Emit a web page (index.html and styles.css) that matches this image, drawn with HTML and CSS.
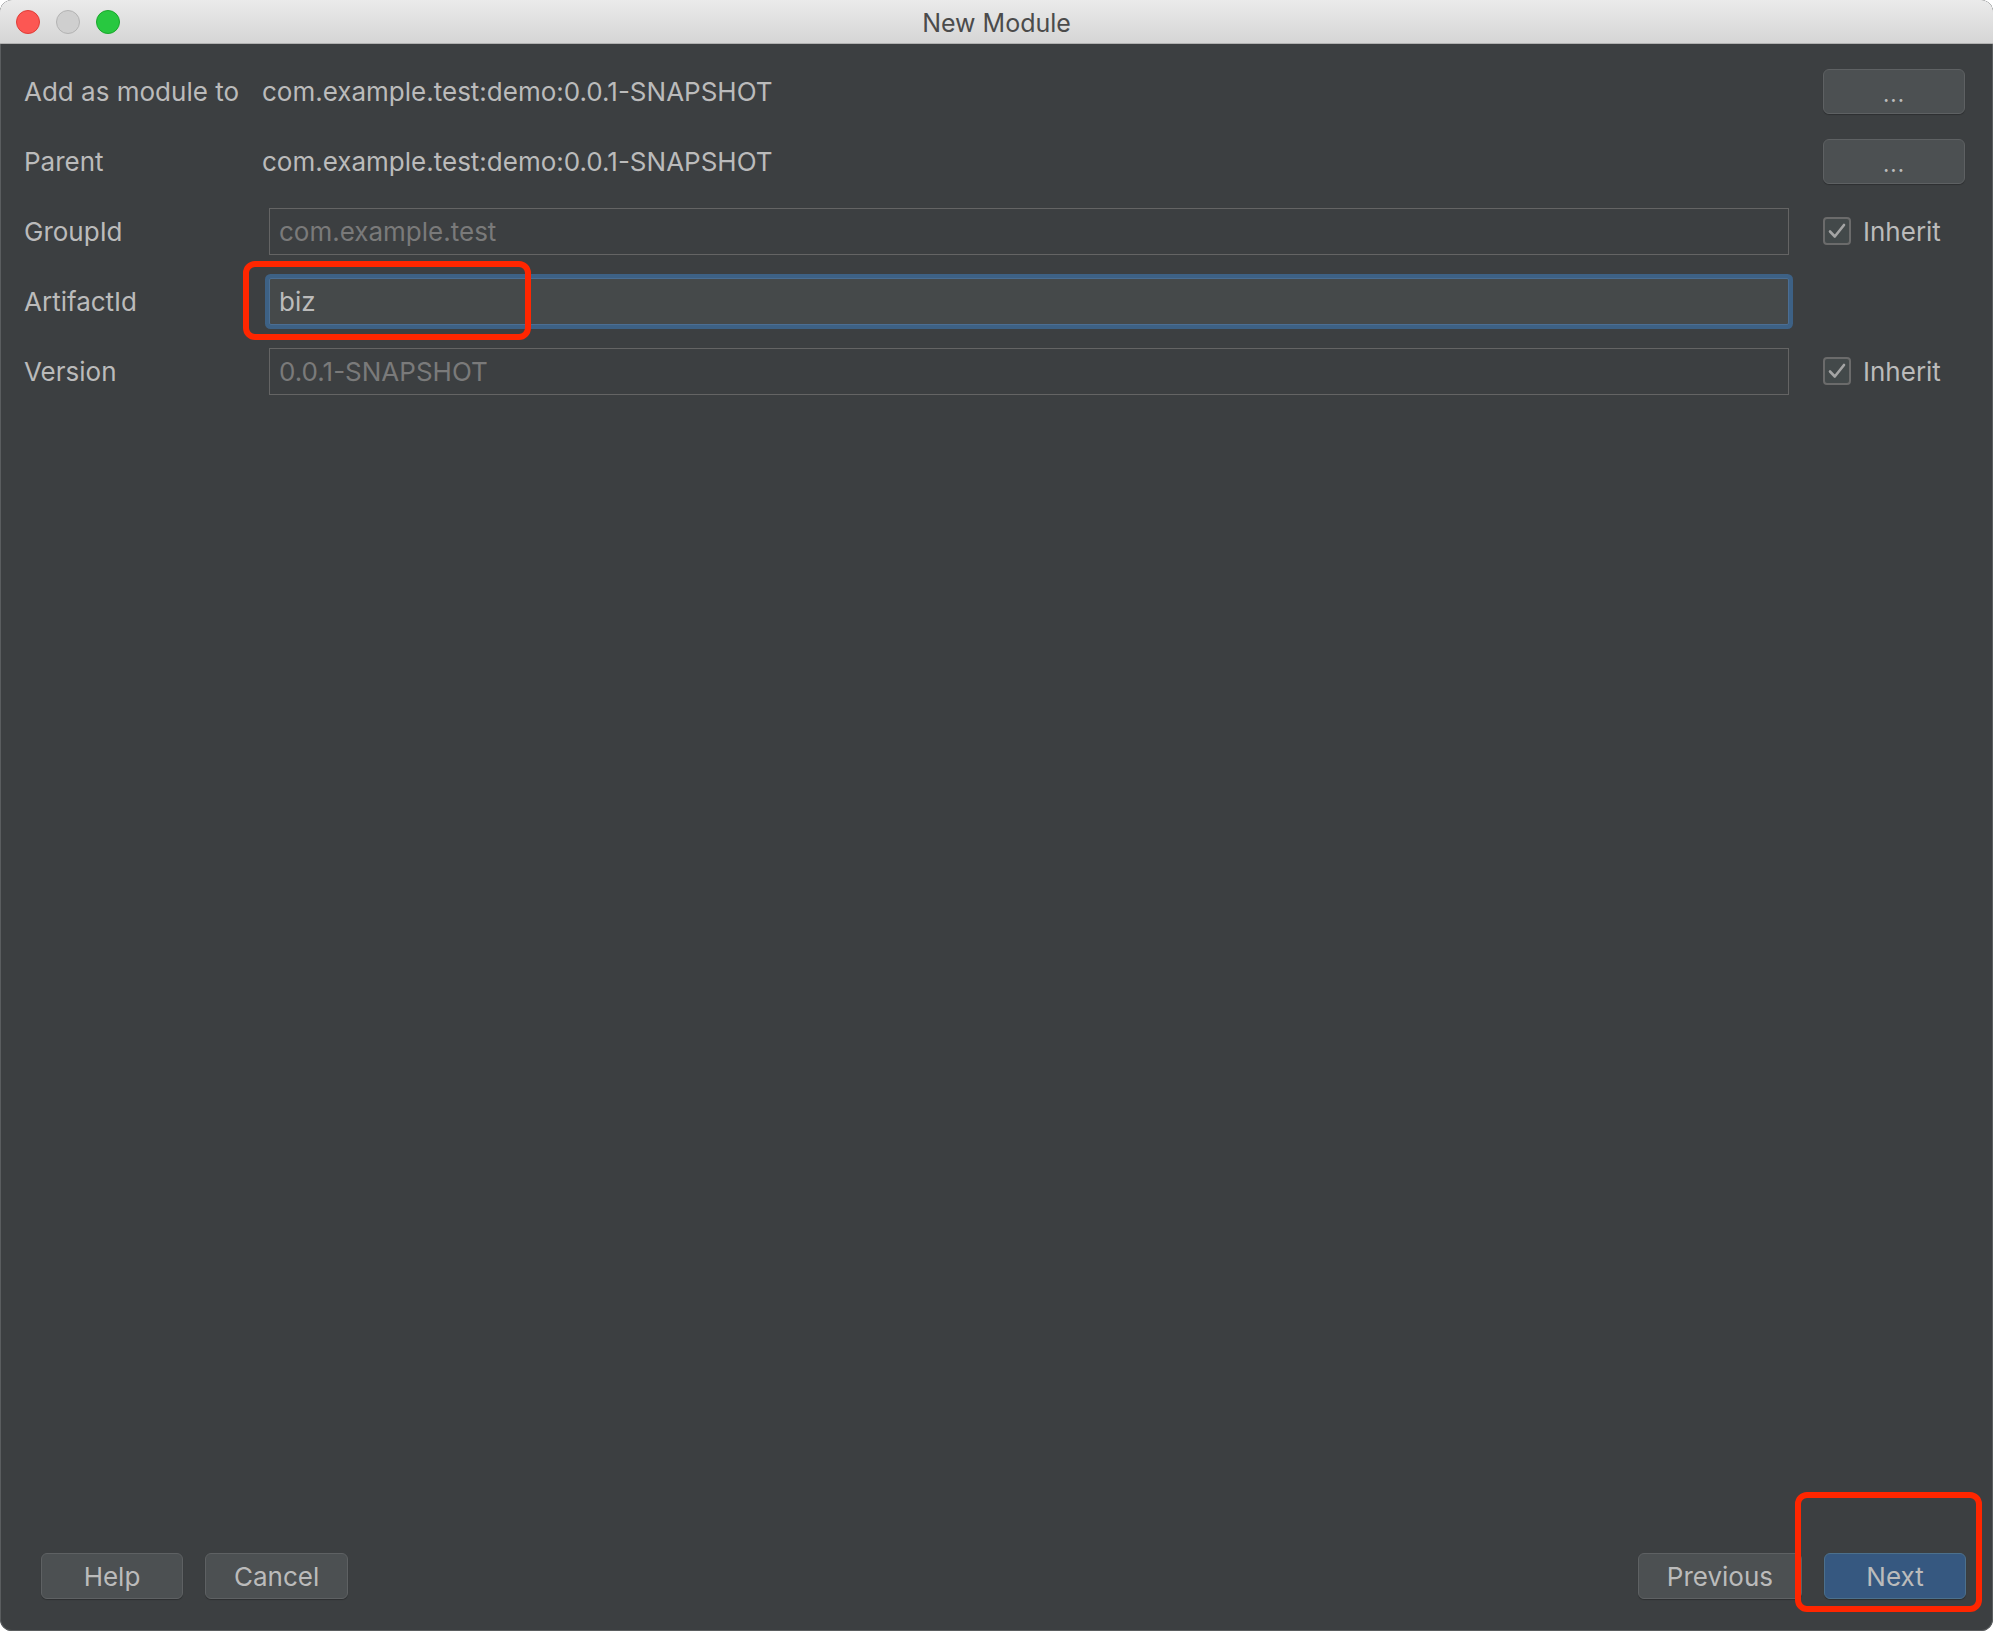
FILE: index.html
```html
<!DOCTYPE html>
<html lang="en">
<head>
  <meta charset="UTF-8">
  <meta name="viewport" content="width=device-width, initial-scale=1.0">
  <title>New Module</title>
  <link rel="stylesheet" href="styles.css">
</head>
<body>
  <div class="window">
    <div class="titlebar">
      <div class="lights">
        <span class="light close"></span>
        <span class="light min"></span>
        <span class="light zoom"></span>
      </div>
      <div class="title">New Module</div>
      <div></div>
    </div>

    <div class="content">
      <div class="form">
        <div class="label">Add as module to</div>
        <div class="value">com.example.test:demo:0.0.1-SNAPSHOT</div>
        <div class="side"><button class="btn browse">...</button></div>

        <div class="label">Parent</div>
        <div class="value">com.example.test:demo:0.0.1-SNAPSHOT</div>
        <div class="side"><button class="btn browse">...</button></div>

        <div class="label">GroupId</div>
        <div class="field-cell"><input class="field" type="text" value="com.example.test" disabled></div>
        <div class="side">
          <label class="check">
            <span class="box"><svg width="28" height="28" viewBox="0 0 28 28"><path d="M7 14.5 L11.8 19.5 L21 8" fill="none" stroke="#a4a4a4" stroke-width="2.6" stroke-linecap="round" stroke-linejoin="round"/></svg></span>
            Inherit
          </label>
        </div>

        <div class="label">ArtifactId</div>
        <div class="field-cell"><input class="field focused" type="text" value="biz"></div>
        <div class="side"></div>

        <div class="label">Version</div>
        <div class="field-cell"><input class="field" type="text" value="0.0.1-SNAPSHOT" disabled></div>
        <div class="side">
          <label class="check">
            <span class="box"><svg width="28" height="28" viewBox="0 0 28 28"><path d="M7 14.5 L11.8 19.5 L21 8" fill="none" stroke="#a4a4a4" stroke-width="2.6" stroke-linecap="round" stroke-linejoin="round"/></svg></span>
            Inherit
          </label>
        </div>
      </div>
    </div>

    <div class="footer">
      <div class="group">
        <button class="btn">Help</button>
        <button class="btn">Cancel</button>
      </div>
      <div class="group">
        <button class="btn prev">Previous</button>
        <button class="btn primary">Next</button>
      </div>
    </div>

    <!-- annotation marks -->
    <div class="mark mark-artifact"></div>
    <div class="mark mark-next"></div>
  </div>
</body>
</html>
```

FILE: styles.css
```css
/* Darcula dialog */
body {
  margin: 0;
  background: #ffffff;
  font-family: Inter, "Liberation Sans", Arial, sans-serif;
}
.window {
  position: relative;
  width: 1993px;
  height: 1631px;
  display: flex;
  flex-direction: column;
  background: #3c3f41;
  border-radius: 12px;
  overflow: hidden;
  box-shadow: inset 0 0 0 1px #5a5d5f;
}

/* title bar */
.titlebar {
  height: 43px;
  display: grid;
  grid-template-columns: 1fr auto 1fr;
  align-items: center;
  background: linear-gradient(#ebebeb, #d5d5d5);
  border-bottom: 1px solid #b1b1b1;
  flex-shrink: 0;
}
.lights {
  display: flex;
  gap: 16px;
  padding-left: 16px;
}
.light {
  width: 22px;
  height: 22px;
  border-radius: 50%;
  border: 1px solid;
}
.close { background: #fc5753; border-color: #df3d37; }
.min { background: #cfcfcf; border-color: #b3b3b3; }
.zoom { background: #28c840; border-color: #1aa72c; }
.title {
  font-size: 25px;
  color: #4b4b4b;
  padding-top: 2px;
}

/* form */
.content {
  flex: 1;
  padding: 12px 29px 0 24px;
}
.form {
  display: grid;
  grid-template-columns: 238px 1fr 141px;
  grid-auto-rows: 70px;
  align-items: center;
  font-size: 26px;
  color: #bbbbbb;
}
.field-cell {
  padding: 0 34px 0 7px;
}
.field {
  display: block;
  width: 100%;
  box-sizing: border-box;
  height: 47px;
  padding: 0 9px;
  font: inherit;
  color: #bbbbbb;
  background: #3c3f41;
  border: 1px solid #646464;
  outline: none;
}
.field:disabled {
  color: #7a7a7a;
}
.field.focused {
  background: #45494a;
  border-color: #4b6e93;
  box-shadow: 0 0 0 4px #3d6185;
  border-radius: 2px;
}

/* buttons */
.btn {
  height: 46px;
  min-width: 142px;
  padding: 0 28px;
  font: inherit;
  font-size: 26px;
  color: #bbbbbb;
  background: #4c5052;
  border: 1px solid #5e6163;
  border-radius: 6px;
  box-shadow: 0 1px 1px rgba(0, 0, 0, 0.25);
}
.browse {
  width: 141px;
  height: 45px;
  font-size: 22px;
  letter-spacing: 1px;
  padding-top: 6px;
}
.primary {
  background: #365880;
  border-color: #4c708c;
}

/* checkbox */
.check {
  display: flex;
  align-items: center;
  gap: 12px;
  font-size: 26px;
  color: #bbbbbb;
}
.box {
  width: 28px;
  height: 28px;
  box-sizing: border-box;
  border: 2px solid #6b6b6b;
  border-radius: 4px;
  background: #43494a;
  display: flex;
  align-items: center;
  justify-content: center;
  overflow: hidden;
}
.box svg {
  flex-shrink: 0;
}

/* footer */
.footer {
  display: flex;
  justify-content: space-between;
  padding: 0 27px 32px 41px;
}
.group {
  display: flex;
  gap: 22px;
}
.prev {
  min-width: 162px;
}

/* red annotations */
.mark {
  position: absolute;
  border: 6px solid #ff2600;
  border-radius: 12px;
  box-sizing: border-box;
}
.mark-artifact {
  left: 243px;
  top: 261px;
  width: 288px;
  height: 79px;
}
.mark-next {
  left: 1795px;
  top: 1492px;
  width: 187px;
  height: 120px;
}
```
